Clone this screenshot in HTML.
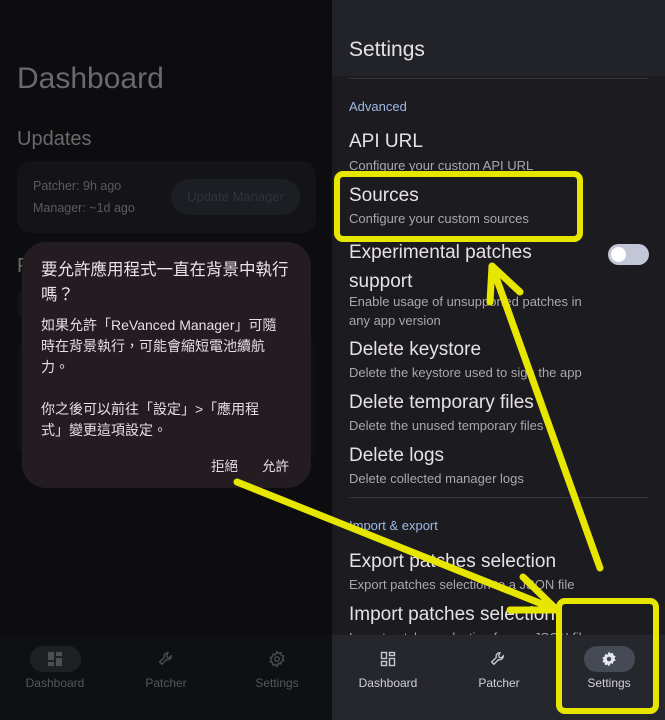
<!DOCTYPE html>
<html><head><meta charset="utf-8"><style>
*{margin:0;padding:0;box-sizing:border-box}
body{width:665px;height:720px;overflow:hidden;background:#0d0d0f;font-family:"Liberation Sans","Noto Sans CJK TC",sans-serif;position:relative}
.a{position:absolute;white-space:nowrap}
#L{position:absolute;left:0;top:0;width:332px;height:720px;background:#0d0d0f}
#R{position:absolute;left:332px;top:0;width:333px;height:720px;background:#1c1b1f}
.t{position:absolute;left:17px;color:#e6e1e5;font-size:19px}
.s{position:absolute;left:17px;color:#a9a8ae;font-size:13px}
.nl{position:absolute;font-size:12px;text-align:center;width:100px}
</style></head><body>
<div id="L">
 <div class="a" style="left:17px;top:62px;font-size:30px;color:#6a6a6c">Dashboard</div>
 <div class="a" style="left:17px;top:128px;font-size:20px;color:#6a6a6c">Updates</div>
 <div class="a" style="left:17px;top:161px;width:299px;height:72px;background:#141417;border-radius:14px"></div>
 <div class="a" style="left:33px;top:179px;font-size:12.5px;color:#5b5b5e">Patcher: 9h ago</div>
 <div class="a" style="left:33px;top:201px;font-size:12.5px;color:#5b5b5e">Manager: ~1d ago</div>
 <div class="a" style="left:171px;top:179px;width:129px;height:36px;background:#1b1e22;border-radius:18px;color:#2f3439;font-size:13px;line-height:36px;text-align:center">Update Manager</div>
 <div class="a" style="left:17px;top:255px;font-size:20px;color:#6a6a6c">F</div>
 <div class="a" style="left:17px;top:290px;width:20px;height:28px;background:#141417;border-radius:8px"></div>
 <div class="a" style="left:17px;top:338px;width:299px;height:120px;background:#111114;border-radius:14px"></div>
 <div class="a" style="left:0;top:635px;width:332px;height:85px;background:#0f1013"></div>
 <div class="a" style="left:30px;top:646px;width:51px;height:26px;background:#1e2024;border-radius:13px"></div>
 <svg class="a" style="left:47px;top:651px" width="16" height="16" viewBox="0 0 16 16" fill="#4d4f55"><rect x="1" y="1" width="6" height="8"/><rect x="9" y="1" width="6" height="4"/><rect x="1" y="11" width="6" height="4"/><rect x="9" y="7" width="6" height="8"/></svg>
 <svg class="a" style="left:157px;top:650px" width="18" height="18" viewBox="0 0 24 24" fill="none" stroke="#4d4f55" stroke-width="1.8"><path d="M14.5 3.5a5 5 0 0 0-4.8 6.4L3.5 16l3 3 6.1-6.2a5 5 0 0 0 6.4-4.8l-2.6 2.5-2.8-.6-.6-2.8z"/></svg>
 <svg class="a" style="left:268px;top:650px" width="18" height="18" viewBox="0 0 24 24" fill="none" stroke="#4d4f55" stroke-width="1.8"><circle cx="12" cy="12" r="3"/><path d="M12 2l2 2.6 3.2-.9.6 3.3 3.1 1.2-1.6 2.9 1.6 2.9-3.1 1.2-.6 3.3-3.2-.9L12 22l-2-2.6-3.2.9-.6-3.3-3.1-1.2 1.6-2.9-1.6-2.9 3.1-1.2.6-3.3 3.2.9z"/></svg>
 <div class="nl" style="left:5px;top:676px;color:#55575c">Dashboard</div>
 <div class="nl" style="left:116px;top:676px;color:#55575c">Patcher</div>
 <div class="nl" style="left:227px;top:676px;color:#55575c">Settings</div>
 <div class="a" style="left:22px;top:242px;width:289px;height:246px;background:#231d22;border-radius:24px"></div>
 <div class="a" style="left:41px;top:258px;font-size:16.5px;color:#ebe3ea;line-height:25px">要允許應用程式一直在背景中執行<br>嗎？</div>
 <div class="a" style="left:41px;top:315px;font-size:14px;color:#e6dee5;line-height:21px">如果允許「ReVanced Manager」可隨<br>時在背景執行，可能會縮短電池續航<br>力。<br><br>你之後可以前往「設定」&gt;「應用程<br>式」變更這項設定。</div>
 <div class="a" style="left:211px;top:455px;font-size:13.5px;color:#e6dee5">拒絕</div>
 <div class="a" style="left:262px;top:455px;font-size:13.5px;color:#e6dee5">允許</div>
</div>
<div id="R">
 <div class="a" style="left:0;top:0;width:333px;height:76px;background:#222328"></div>
 <div class="a" style="left:17px;top:38px;font-size:21px;color:#e6e1e5">Settings</div>
 <div class="a" style="left:17px;top:78px;width:300px;height:1px;background:#35353a"></div>
 <div class="a" style="left:17px;top:99px;font-size:13px;color:#9fbbe6">Advanced</div>
 <div class="t" style="top:131px">API URL</div><div class="s" style="top:158px">Configure your custom API URL</div>
 <div class="t" style="top:185px">Sources</div><div class="s" style="top:211px">Configure your custom sources</div>
 <div class="t" style="top:238px;line-height:29px">Experimental patches<br>support</div>
 <div class="s" style="top:292px;line-height:19px">Enable usage of unsupported patches in<br>any app version</div>
 <div class="a" style="left:276px;top:244px;width:41px;height:21px;background:#c3c6d6;border-radius:11px"></div>
 <div class="a" style="left:279px;top:247px;width:15px;height:15px;background:#fff;border-radius:50%"></div>
 <div class="t" style="top:339px">Delete keystore</div><div class="s" style="top:365px">Delete the keystore used to sign the app</div>
 <div class="t" style="top:392px">Delete temporary files</div><div class="s" style="top:418px">Delete the unused temporary files</div>
 <div class="t" style="top:445px">Delete logs</div><div class="s" style="top:471px">Delete collected manager logs</div>
 <div class="a" style="left:17px;top:497px;width:300px;height:1px;background:#35353a"></div>
 <div class="a" style="left:17px;top:518px;font-size:13px;color:#9fbbe6">Import &amp; export</div>
 <div class="t" style="top:551px">Export patches selection</div><div class="s" style="top:577px">Export patches selection to a JSON file</div>
 <div class="t" style="top:604px">Import patches selection</div><div class="s" style="top:630px">Import patches selection from a JSON file</div>
 <div class="a" style="left:0;top:635px;width:333px;height:85px;background:#26272c"></div>
 <svg class="a" style="left:48px;top:651px" width="16" height="16" viewBox="0 0 16 16" fill="none" stroke="#c8c9d0" stroke-width="1.4"><rect x="1.5" y="1.5" width="5" height="6"/><rect x="9.5" y="1.5" width="5" height="3"/><rect x="1.5" y="10.5" width="5" height="4"/><rect x="9.5" y="7.5" width="5" height="7"/></svg>
 <svg class="a" style="left:157px;top:650px" width="18" height="18" viewBox="0 0 24 24" fill="none" stroke="#c8c9d0" stroke-width="1.8"><path d="M14.5 3.5a5 5 0 0 0-4.8 6.4L3.5 16l3 3 6.1-6.2a5 5 0 0 0 6.4-4.8l-2.6 2.5-2.8-.6-.6-2.8z"/></svg>
 <div class="a" style="left:252px;top:646px;width:51px;height:26px;background:#454a55;border-radius:13px"></div>
 <svg class="a" style="left:268px;top:650px" width="18" height="18" viewBox="0 0 24 24"><path fill="#e6e8f0" fill-rule="evenodd" d="M12 2l2 2.6 3.2-.9.6 3.3 3.1 1.2-1.6 2.9 1.6 2.9-3.1 1.2-.6 3.3-3.2-.9L12 22l-2-2.6-3.2.9-.6-3.3-3.1-1.2 1.6-2.9-1.6-2.9 3.1-1.2.6-3.3 3.2.9zM12 9a3 3 0 1 0 0 6 3 3 0 0 0 0-6z"/></svg>
 <div class="nl" style="left:6px;top:676px;color:#d0d1d8">Dashboard</div>
 <div class="nl" style="left:117px;top:676px;color:#d0d1d8">Patcher</div>
 <div class="nl" style="left:227px;top:676px;color:#d0d1d8">Settings</div>
</div>
<svg class="a" style="left:0;top:0" width="665" height="720" fill="none" stroke="#e6e600" stroke-linecap="round" stroke-linejoin="round">
 <rect x="337" y="174" width="243" height="65" rx="6" stroke-width="6"/>
 <rect x="559" y="601" width="97" height="110" rx="6" stroke-width="6"/>
 <path d="M237 482L557 610M523 577L557 610L510 610" stroke-width="7"/>
 <path d="M600 568L492 266M490 302L492 266L520 292" stroke-width="7"/>
</svg>
</body></html>
